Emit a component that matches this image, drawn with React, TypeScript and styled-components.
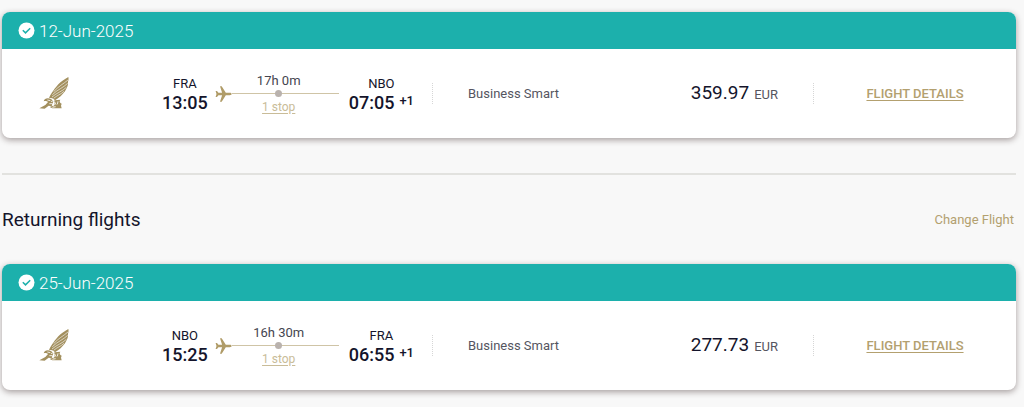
import React from "react";
import styled, { createGlobalStyle } from "styled-components";

const GlobalStyle = createGlobalStyle`
  *, *::before, *::after { box-sizing: border-box; }
  body {
    margin: 0;
    background: #f8f8f8;
    color: #14142b;
    font-family: Roboto, "Liberation Sans", sans-serif;
    font-size: 14px;
    line-height: 16px;
  }
`;

const Page = styled.main`
  padding: 12px 8px 16px 2px;
`;

const Card = styled.article`
  overflow: hidden;
  border-radius: 8px;
  background: #fff;
  box-shadow: 0 2px 6px rgba(40, 20, 20, 0.4);
`;

const CardHeader = styled.header`
  display: flex;
  align-items: center;
  gap: 4px;
  height: 37px;
  padding: 0 16px;
  background: #1cb0ac;
  color: #fff;
`;

const TravelDate = styled.h3`
  margin: 0;
  font-size: 17px;
  font-weight: 300;
  line-height: 20px;
`;

const CardBody = styled.div`
  display: grid;
  grid-template-columns: 160fr 270fr 382fr 202fr;
  align-items: center;
  min-height: 89px;
`;

const Carrier = styled.div`
  display: flex;
  padding-left: 37px;
`;

const Leg = styled.div`
  display: flex;
  align-items: center;
  padding-right: 18px;
`;

const Stop = styled.div`
  display: grid;
  justify-items: center;
  padding-top: 1px;
`;

const Airport = styled.span`
  font-size: 13px;
  line-height: 18px;
`;

const Time = styled.time`
  font-size: 18px;
  font-weight: 500;
  line-height: 20px;
`;

const Arrival = styled.div`
  display: flex;
  align-items: flex-start;
  gap: 5px;
`;

const DayShift = styled.span`
  font-size: 13px;
  font-weight: 500;
  line-height: 16px;
`;

const Journey = styled.div`
  flex: 1;
  display: grid;
  justify-items: center;
  margin: 0 6px 0 7px;
`;

const Duration = styled.span`
  font-size: 13px;
  line-height: 16px;
  color: #45454f;
`;

const Track = styled.div`
  display: flex;
  align-items: center;
  width: 100%;
  height: 10px;
  padding-right: 4px;
`;

const Line = styled.span<{ $grow: number }>`
  flex: ${(p) => p.$grow};
  height: 1px;
  background: #cfc4a6;
`;

const Dot = styled.span`
  width: 7px;
  height: 7px;
  border-radius: 50%;
  background: #b9b2ad;
`;

const TextLink = styled.a<{ $size: number; $strong?: boolean; $plain?: boolean; $light?: boolean }>`
  color: ${(p) => (p.$light ? "#c9bc98" : "#b3a06f")};
  font-size: ${(p) => p.$size}px;
  font-weight: ${(p) => (p.$strong ? 500 : 400)};
  line-height: 16px;
  text-decoration: ${(p) => (p.$plain ? "none" : "underline")};
  text-underline-offset: 2px;
`;

const Divided = styled.div`
  display: flex;
  align-items: center;
  justify-content: space-between;
  height: 21px;
  padding: 0 35px;
  border: dotted #d6d6d6;
  border-width: 0 1px;
`;

const FareClass = styled.span`
  font-size: 13px;
  color: #55555f;
`;

const Price = styled.span`
  font-size: 19px;
  line-height: 20px;
`;

const Currency = styled.small`
  margin-left: 5px;
  font-size: 13px;
  color: #55555f;
`;

const Action = styled.div`
  text-align: center;
`;

const Rule = styled.hr`
  height: 2px;
  margin: 35px 0 33px;
  border: 0;
  background: #e2e2df;
`;

const SectionHead = styled.div`
  display: flex;
  align-items: center;
  justify-content: space-between;
  margin-bottom: 33px;
  padding-right: 2px;
`;

const SectionTitle = styled.h2`
  margin: 0;
  font-size: 19px;
  font-weight: 400;
  line-height: 23px;
`;

const CheckIcon = () => (
  <svg width="17" height="17" viewBox="0 0 17 17" aria-hidden="true">
    <circle cx="8.5" cy="8.5" r="8" fill="#fff" />
    <path d="M4.8 8.3l2.7 2.6 4.7-4.6" fill="none" stroke="#1cb0ac" strokeWidth="1.5" />
  </svg>
);

const PlaneIcon = () => (
  <svg width="17" height="16" viewBox="0 0 17 16" aria-hidden="true">
    <path
      d="M16.6 8c0-.8-.8-1.200-1.800-1.200h-4L6.700 .3H5l2.100 6.500H3.400L2 5H.6l.9 3-.9 3H2l1.400-1.800h3.700L5 15.700h1.700l4.100-6.500h4c1 0 1.800-.4 1.800-1.200z"
      fill="#b09c68"
    />
  </svg>
);

const FalconLogo = () => (
  <svg width="30" height="33" viewBox="0 0 90 99" role="img" aria-label="Airline">
    <g fill="#a3905f">
      <path d="M88 0C76 7 66 13 58 22 50 31 45 38 40 45 35 52 32 57 30 64c8-3 14 1 18 6l9-6C68 55 77 46 82 35 86 28 88 20 87 14 89 9 89 4 88 0z" />
      <path d="M36 66c-10-4-20-2-22 7 6-2 10-1 13 2l-8 9L1 94l16 1 12-9 9 2 5-15z" />
      <path d="M46 70l18-2c-4 5-2 9 4 12l-2 6 2 8H40l-8-4 15-6z" />
    </g>
    <g fill="none" stroke="#fff" strokeWidth="1.8">
      <path d="M87 9C73 21 58 28 44 44" />
      <path d="M86 19C73 32 55 38 40 53" />
      <path d="M82 31C70 43 54 47 39 60" />
      <path d="M75 43C66 52 54 55 44 64" />
    </g>
    <g fill="none" stroke="#fff" strokeWidth="2.4">
      <path d="M25 69l9 2M31 80l9 0 4 8M47 75l4 8M57 73l-2 9M40 91l10-2M36 74l7-3" />
    </g>
  </svg>
);

type Flight = {
  date: string;
  from: string;
  to: string;
  departs: string;
  arrives: string;
  duration: string;
  price: string;
};

const outbound: Flight = {
  date: "12-Jun-2025", from: "FRA", to: "NBO", departs: "13:05", arrives: "07:05", duration: "17h 0m", price: "359.97",
};
const inbound: Flight = {
  date: "25-Jun-2025", from: "NBO", to: "FRA", departs: "15:25", arrives: "06:55", duration: "16h 30m", price: "277.73",
};

const FlightCard = ({ flight }: { flight: Flight }) => (
  <Card>
    <CardHeader>
      <CheckIcon />
      <TravelDate>{flight.date}</TravelDate>
    </CardHeader>
    <CardBody>
      <Carrier>
        <FalconLogo />
      </Carrier>
      <Leg>
        <Stop>
          <Airport>{flight.from}</Airport>
          <Time>{flight.departs}</Time>
        </Stop>
        <Journey>
          <Duration>{flight.duration}</Duration>
          <Track>
            <PlaneIcon />
            <Line $grow={3} />
            <Dot />
            <Line $grow={4} />
          </Track>
          <TextLink href="#stops" $size={12} $light>1 stop</TextLink>
        </Journey>
        <Stop>
          <Airport>{flight.to}</Airport>
          <Arrival>
            <Time>{flight.arrives}</Time>
            <DayShift>+1</DayShift>
          </Arrival>
        </Stop>
      </Leg>
      <Divided>
        <FareClass>Business Smart</FareClass>
        <Price>
          {flight.price}
          <Currency>EUR</Currency>
        </Price>
      </Divided>
      <Action>
        <TextLink href="#details" $size={13} $strong>FLIGHT DETAILS</TextLink>
      </Action>
    </CardBody>
  </Card>
);

export default function App() {
  return (
    <>
      <GlobalStyle />
      <Page>
        <FlightCard flight={outbound} />
        <Rule />
        <SectionHead>
          <SectionTitle>Returning flights</SectionTitle>
          <TextLink href="#change" $size={13} $plain>Change Flight</TextLink>
        </SectionHead>
        <FlightCard flight={inbound} />
      </Page>
    </>
  );
}
